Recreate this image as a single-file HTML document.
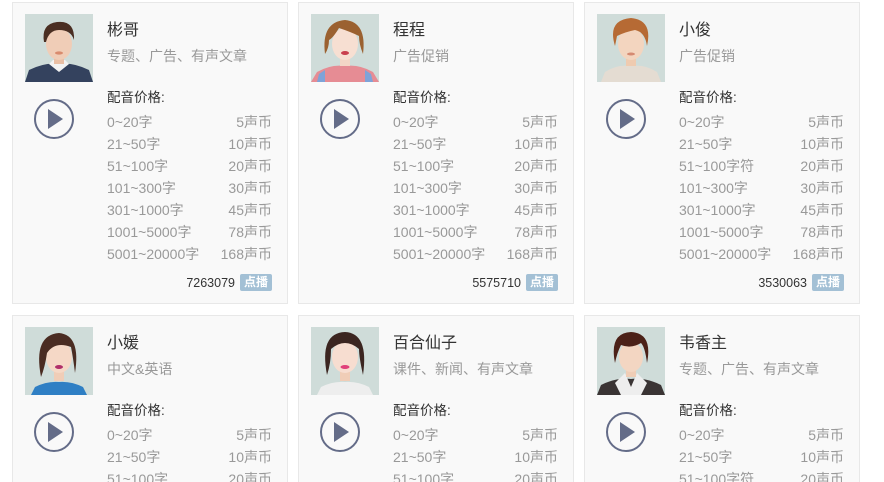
<!DOCTYPE html>
<html style="width:884px;height:482px;overflow:hidden"><head><meta charset="utf-8">
<style>
*{margin:0;padding:0;box-sizing:border-box}
body{width:884px;height:482px;overflow:hidden;background:#fff;font-family:"Liberation Sans","Noto Sans CJK SC",sans-serif;position:relative}
.card{position:absolute;width:276px;height:302px;border:1px solid #e8e8e8;background:#f9f9f9}
.av{position:absolute;left:12px;top:11px;width:68px;height:68px}
.name{position:absolute;left:94px;top:18px;font-size:16px;color:#333;line-height:20px}
.tags{position:absolute;left:94px;top:44px;font-size:14px;color:#999;line-height:18px}
.ph{position:absolute;left:94px;top:86px;font-size:13.5px;color:#333;line-height:18px}
.play{position:absolute;left:20px;top:95px}
.rows{position:absolute;left:94px;top:108px;width:165px;font-size:14px;color:#999}
.r{display:flex;justify-content:space-between;height:22px;line-height:22px}
.cnt{position:absolute;right:52px;top:271px;font-size:12.5px;color:#333;line-height:18px}
.bd{position:absolute;left:227px;top:271px;width:32px;height:17px;background:#a3c0d5;color:#fff;font-size:12px;font-weight:bold;text-align:center;line-height:17px;border-radius:2px}
</style></head><body>

<div class="card" style="left:12px;top:2px">
<svg class="av" viewBox="0 0 68 68"><rect width="68" height="68" fill="#cfdcd9"/><path d="M0 68 L4 56 Q20 48 34 50 Q48 48 64 56 L68 68Z" fill="#34425e"/><path d="M24 50 L34 58 L44 50 L40 46 L28 46Z" fill="#f2f2f2"/><rect x="29" y="38" width="10" height="12" fill="#e9bfa5"/><ellipse cx="34" cy="30" rx="13" ry="16" fill="#f0cdb7"/><path d="M19 28 Q16 10 32 8 Q50 6 49 26 Q46 16 34 16 Q24 16 21 28Z" fill="#4a2e22"/><ellipse cx="34" cy="39" rx="4" ry="1.6" fill="#d98b6e"/></svg>
<div class="name">彬哥</div><div class="tags">专题、广告、有声文章</div>
<svg class="play" width="42" height="42" viewBox="0 0 42 42"><circle cx="21" cy="21" r="19" fill="none" stroke="#646c88" stroke-width="2"/><path d="M15 11 L30 21 L15 31Z" fill="#646c88"/></svg>
<div class="ph">配音价格:</div>
<div class="rows"><div class="r"><span>0~20字</span><span>5声币</span></div><div class="r"><span>21~50字</span><span>10声币</span></div><div class="r"><span>51~100字</span><span>20声币</span></div><div class="r"><span>101~300字</span><span>30声币</span></div><div class="r"><span>301~1000字</span><span>45声币</span></div><div class="r"><span>1001~5000字</span><span>78声币</span></div><div class="r"><span>5001~20000字</span><span>168声币</span></div></div>
<div class="cnt">7263079</div><div class="bd">点播</div>
</div>

<div class="card" style="left:298px;top:2px">
<svg class="av" viewBox="0 0 68 68"><rect width="68" height="68" fill="#cfdcd9"/><path d="M0 68 L6 58 Q20 50 34 52 Q48 50 62 58 L68 68Z" fill="#e68c94"/><path d="M8 60 L14 56 L14 68 L6 68Z M60 60 L54 56 L54 68 L62 68Z" fill="#7ea3d8"/><rect x="29" y="38" width="10" height="14" fill="#f3d6c6"/><ellipse cx="34" cy="30" rx="13" ry="16" fill="#f7dfd2"/><path d="M14 40 Q10 8 34 6 Q56 8 52 40 Q48 30 48 22 Q40 18 28 14 Q22 24 18 26 Q18 34 14 40Z" fill="#9b6130"/><ellipse cx="34" cy="39" rx="4" ry="2" fill="#c9404e"/></svg>
<div class="name">程程</div><div class="tags">广告促销</div>
<svg class="play" width="42" height="42" viewBox="0 0 42 42"><circle cx="21" cy="21" r="19" fill="none" stroke="#646c88" stroke-width="2"/><path d="M15 11 L30 21 L15 31Z" fill="#646c88"/></svg>
<div class="ph">配音价格:</div>
<div class="rows"><div class="r"><span>0~20字</span><span>5声币</span></div><div class="r"><span>21~50字</span><span>10声币</span></div><div class="r"><span>51~100字</span><span>20声币</span></div><div class="r"><span>101~300字</span><span>30声币</span></div><div class="r"><span>301~1000字</span><span>45声币</span></div><div class="r"><span>1001~5000字</span><span>78声币</span></div><div class="r"><span>5001~20000字</span><span>168声币</span></div></div>
<div class="cnt">5575710</div><div class="bd">点播</div>
</div>

<div class="card" style="left:584px;top:2px">
<svg class="av" viewBox="0 0 68 68"><rect width="68" height="68" fill="#cfdcd9"/><path d="M4 68 L8 58 Q20 50 34 52 Q48 50 60 58 L64 68Z" fill="#e4dcd2"/><rect x="29" y="38" width="10" height="14" fill="#efcbb0"/><ellipse cx="34" cy="30" rx="13" ry="16" fill="#f3d5bf"/><path d="M18 32 Q10 6 34 4 Q56 6 50 32 Q48 18 38 16 Q28 18 20 22Z" fill="#b66a34"/><ellipse cx="34" cy="40" rx="4" ry="1.5" fill="#d58a72"/></svg>
<div class="name">小俊</div><div class="tags">广告促销</div>
<svg class="play" width="42" height="42" viewBox="0 0 42 42"><circle cx="21" cy="21" r="19" fill="none" stroke="#646c88" stroke-width="2"/><path d="M15 11 L30 21 L15 31Z" fill="#646c88"/></svg>
<div class="ph">配音价格:</div>
<div class="rows"><div class="r"><span>0~20字</span><span>5声币</span></div><div class="r"><span>21~50字</span><span>10声币</span></div><div class="r"><span>51~100字符</span><span>20声币</span></div><div class="r"><span>101~300字</span><span>30声币</span></div><div class="r"><span>301~1000字</span><span>45声币</span></div><div class="r"><span>1001~5000字</span><span>78声币</span></div><div class="r"><span>5001~20000字</span><span>168声币</span></div></div>
<div class="cnt">3530063</div><div class="bd">点播</div>
</div>

<div class="card" style="left:12px;top:315px">
<svg class="av" viewBox="0 0 68 68"><rect width="68" height="68" fill="#cfdcd9"/><path d="M6 68 L10 60 Q22 54 34 55 Q46 54 58 60 L62 68Z" fill="#2f7fc4"/><rect x="29" y="38" width="10" height="16" fill="#f0cdb7"/><ellipse cx="34" cy="30" rx="13" ry="16" fill="#f5d8c6"/><path d="M16 50 Q8 8 34 6 Q56 8 50 46 Q48 30 46 20 Q30 14 22 26 Q20 40 16 50Z" fill="#4a2c22"/><ellipse cx="34" cy="40" rx="4" ry="2" fill="#b0306a"/></svg>
<div class="name">小媛</div><div class="tags">中文&amp;英语</div>
<svg class="play" width="42" height="42" viewBox="0 0 42 42"><circle cx="21" cy="21" r="19" fill="none" stroke="#646c88" stroke-width="2"/><path d="M15 11 L30 21 L15 31Z" fill="#646c88"/></svg>
<div class="ph">配音价格:</div>
<div class="rows"><div class="r"><span>0~20字</span><span>5声币</span></div><div class="r"><span>21~50字</span><span>10声币</span></div><div class="r"><span>51~100字</span><span>20声币</span></div><div class="r"><span>101~300字</span><span>30声币</span></div></div>
</div>

<div class="card" style="left:298px;top:315px">
<svg class="av" viewBox="0 0 68 68"><rect width="68" height="68" fill="#cfdcd9"/><path d="M6 68 L10 60 Q22 54 34 55 Q46 54 58 60 L62 68Z" fill="#eeeeee"/><rect x="29" y="38" width="10" height="16" fill="#f0cdb7"/><ellipse cx="34" cy="30" rx="13" ry="16" fill="#f7ddd0"/><path d="M16 48 Q8 6 34 5 Q58 6 52 48 Q48 30 48 22 Q34 10 20 22 Q20 36 16 48Z" fill="#3b2520"/><ellipse cx="34" cy="40" rx="4.5" ry="2" fill="#e0407a"/></svg>
<div class="name">百合仙子</div><div class="tags">课件、新闻、有声文章</div>
<svg class="play" width="42" height="42" viewBox="0 0 42 42"><circle cx="21" cy="21" r="19" fill="none" stroke="#646c88" stroke-width="2"/><path d="M15 11 L30 21 L15 31Z" fill="#646c88"/></svg>
<div class="ph">配音价格:</div>
<div class="rows"><div class="r"><span>0~20字</span><span>5声币</span></div><div class="r"><span>21~50字</span><span>10声币</span></div><div class="r"><span>51~100字</span><span>20声币</span></div><div class="r"><span>101~300字</span><span>30声币</span></div></div>
</div>

<div class="card" style="left:584px;top:315px">
<svg class="av" viewBox="0 0 68 68"><rect width="68" height="68" fill="#cfdcd9"/><path d="M0 68 L4 58 Q20 50 34 52 Q48 50 64 58 L68 68Z" fill="#3a3434"/><path d="M18 56 L28 46 L34 60 L40 46 L50 56 L44 68 L24 68Z" fill="#eeeeee"/><rect x="29" y="38" width="10" height="12" fill="#efcdb6"/><ellipse cx="34" cy="30" rx="12" ry="15" fill="#f3d6c2"/><path d="M18 36 Q12 6 34 5 Q56 6 50 36 Q48 20 44 16 Q34 22 24 18 Q20 26 18 36Z" fill="#4b2118"/></svg>
<div class="name">韦香主</div><div class="tags">专题、广告、有声文章</div>
<svg class="play" width="42" height="42" viewBox="0 0 42 42"><circle cx="21" cy="21" r="19" fill="none" stroke="#646c88" stroke-width="2"/><path d="M15 11 L30 21 L15 31Z" fill="#646c88"/></svg>
<div class="ph">配音价格:</div>
<div class="rows"><div class="r"><span>0~20字</span><span>5声币</span></div><div class="r"><span>21~50字</span><span>10声币</span></div><div class="r"><span>51~100字符</span><span>20声币</span></div><div class="r"><span>101~300字</span><span>30声币</span></div></div>
</div>

</body></html>
